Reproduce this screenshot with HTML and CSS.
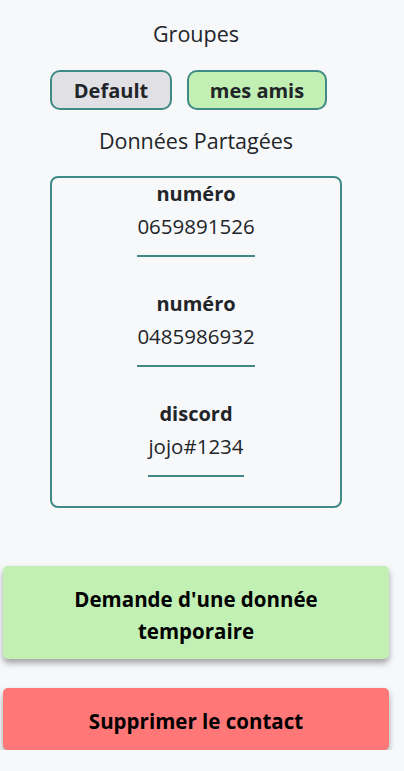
FILE: index.html
```html
<!DOCTYPE html>
<html lang="fr">
<head>
<meta charset="utf-8">
<link rel="stylesheet" href="styles.css">
</head>
<body>
<main class="page">
  <h2 class="title">Groupes</h2>
  <div class="chips">
    <span class="chip chip-default">Default</span>
    <span class="chip chip-friends">mes amis</span>
  </div>
  <h2 class="title title-shared">Données Partagées</h2>
  <section class="card">
    <div class="item">
      <div class="label">numéro</div>
      <div class="value">0659891526</div>
    </div>
    <div class="item">
      <div class="label">numéro</div>
      <div class="value">0485986932</div>
    </div>
    <div class="item">
      <div class="label">discord</div>
      <div class="value">jojo#1234</div>
    </div>
  </section>
  <button class="action action-request">Demande d'une donnée<br>temporaire</button>
  <button class="action action-delete">Supprimer le contact</button>
</main>
</body>
</html>
```
FILE: styles.css
```css
html, body {
  margin: 0;
  padding: 0;
  background: #f7f8fa;
}
body {
  font-family: "Open Sans", "Noto Sans", sans-serif;
  color: #212529;
}
.page {
  width: 392px;
  display: flex;
  flex-direction: column;
  align-items: center;
  padding-top: 19px;
}
.title {
  margin: 0;
  font-size: 21.5px;
  font-weight: 400;
  line-height: 30px;
}
.chips {
  display: flex;
  margin-top: 21px;
}
.chip {
  box-sizing: border-box;
  height: 40px;
  margin-right: 15px;
  border: 2px solid #3f8a84;
  border-radius: 10px;
  font-weight: 700;
  font-size: 20px;
  display: flex;
  align-items: center;
  justify-content: center;
}
.chip-default {
  width: 122px;
  background: #e1e1e5;
}
.chip-friends {
  width: 140px;
  background: #c2efb4;
}
.title-shared {
  margin-top: 16px;
}
.card {
  box-sizing: border-box;
  width: 292px;
  margin-top: 20px;
  border: 2px solid #3f8a84;
  border-radius: 8px;
  padding-bottom: 29px;
  display: flex;
  flex-direction: column;
  align-items: center;
  gap: 31px;
}
.item {
  display: flex;
  flex-direction: column;
  align-items: center;
}
.label {
  font-weight: 700;
  font-size: 20px;
  line-height: 32px;
}
.value {
  font-size: 20.5px;
  line-height: 30px;
  padding-top: 1px;
  padding-bottom: 14px;
  border-bottom: 2px solid #3f8a84;
}
.action {
  box-sizing: border-box;
  width: 386px;
  border: none;
  border-radius: 5px;
  font-family: inherit;
  font-weight: 700;
  font-size: 20.5px;
  line-height: 32px;
  color: #000;
  padding: 17px 60px 12px;
  box-shadow: 0 4px 6px rgba(0, 0, 0, 0.35);
}
.action-request {
  margin-top: 58px;
  background: #c2efb4;
}
.action-delete {
  margin-top: 29px;
  padding-bottom: 13px;
  background: #ff7777;
}
```
